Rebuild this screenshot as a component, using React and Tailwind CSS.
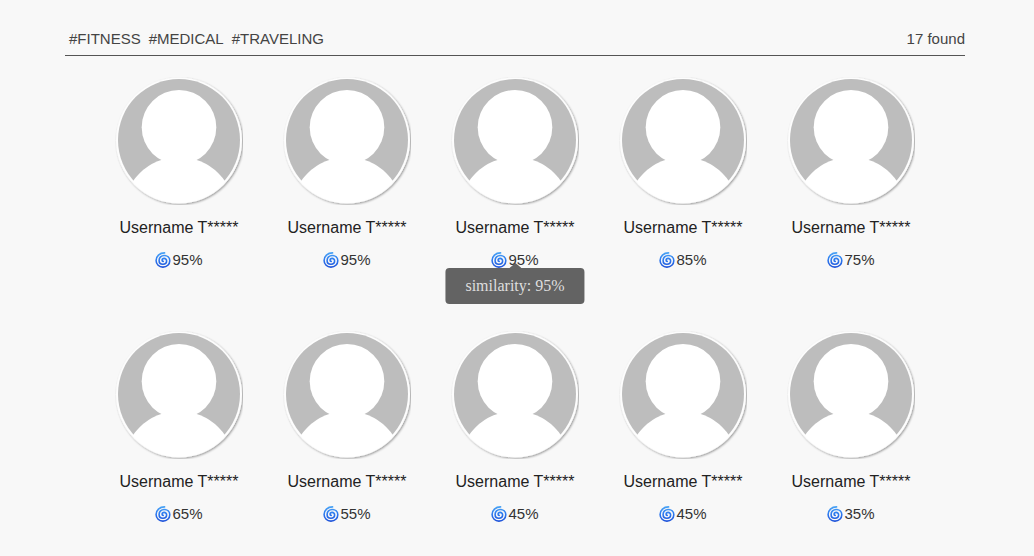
import React from 'react';

const tags = ['#FITNESS', '#MEDICAL', '#TRAVELING'];

const total = 17;

const users = [
  { id: 1, name: 'Username T*****', similarity: 95 },
  { id: 2, name: 'Username T*****', similarity: 95 },
  { id: 3, name: 'Username T*****', similarity: 95 },
  { id: 4, name: 'Username T*****', similarity: 85 },
  { id: 5, name: 'Username T*****', similarity: 75 },
  { id: 6, name: 'Username T*****', similarity: 65 },
  { id: 7, name: 'Username T*****', similarity: 55 },
  { id: 8, name: 'Username T*****', similarity: 45 },
  { id: 9, name: 'Username T*****', similarity: 45 },
  { id: 10, name: 'Username T*****', similarity: 35 },
];

const Avatar = () => (
  <svg viewBox="0 0 128 128" className="w-32 h-32" aria-hidden="true">
    <defs>
      <clipPath id="avatar-clip">
        <circle cx="64" cy="63.5" r="62" />
      </clipPath>
      <filter id="avatar-shadow" x="-10%" y="-10%" width="120%" height="120%">
        <feDropShadow dx="1" dy="1" stdDeviation="0.8" floodColor="#000" floodOpacity="0.4" />
      </filter>
    </defs>
    <circle cx="64" cy="63.5" r="63" fill="#fdfdfd" filter="url(#avatar-shadow)" />
    <circle cx="64" cy="63" r="61" fill="#bdbdbd" />
    <g clipPath="url(#avatar-clip)" fill="#fff">
      <circle cx="64" cy="50.3" r="37.3" />
      <circle cx="64" cy="136" r="56" />
    </g>
  </svg>
);

const Cyclone = () => (
  <svg viewBox="0 0 16 16" className="w-4 h-4 shrink-0" fill="none" aria-hidden="true">
    <defs>
      <linearGradient id="cyclone" gradientUnits="userSpaceOnUse" x1="8" y1="0" x2="8" y2="16">
        <stop offset="0" stopColor="#4ba6f5" />
        <stop offset="0.45" stopColor="#2f7df0" />
        <stop offset="1" stopColor="#1c4fd8" />
      </linearGradient>
    </defs>
    <path
      d="M9.6 .9C4.600 .8 1.100 4.200 1.100 8.400C1.100 12.400 4.200 15.100 7.900 15.100C11.900 15.100 14.800 12.300 14.800 8.800C14.800 5.600 12.300 3.500 9.300 3.500C6.200 3.500 4.100 5.700 4.100 8.400C4.100 10.700 5.800 12.200 7.900 12.200C10.100 12.200 11.600 10.800 11.600 9C11.600 7.400 10.500 6.400 9.200 6.400C7.900 6.400 7.100 7.300 7.100 8.300C7.100 9 7.600 9.400 8.200 9.400"
      stroke="url(#cyclone)"
      strokeWidth="1.600"
      strokeLinecap="round"
    />
  </svg>
);

const Tooltip = ({ id, children }) => (
  <span
    id={id}
    role="tooltip"
    className="absolute top-5 left-1/2 -translate-x-1/2 px-5 py-1.5 rounded bg-[#636363] text-[#dedede] text-base leading-6 whitespace-nowrap font-['Liberation_Serif',serif]"
  >
    <svg
      viewBox="0 0 12 5"
      className="absolute bottom-full left-1/2 -translate-x-1/2 w-3 h-[5px] fill-[#636363]"
      aria-hidden="true"
    >
      <path d="M0 5L6 0L12 5Z" />
    </svg>
    {children}
  </span>
);

const UserCard = ({ user, showTooltip }) => {
  const tooltipId = `similarity-${user.id}`;

  return (
    <li className="flex flex-col items-center">
      <Avatar />
      <h2 className="mt-[11px] text-base leading-6 text-[#222]">{user.name}</h2>
      <div
        className="relative mt-2 flex items-center text-[15px] leading-6 text-[#333]"
        aria-describedby={showTooltip ? tooltipId : undefined}
      >
        <Cyclone />
        <span className="pl-px">{user.similarity}%</span>
        {showTooltip && <Tooltip id={tooltipId}>similarity: {user.similarity}%</Tooltip>}
      </div>
    </li>
  );
};

const App = () => {
  const hoveredId = 3;

  return (
    <div className="min-h-screen bg-[#f8f8f8] pr-1 font-['Liberation_Sans',Arial,sans-serif]">
      <main className="w-full max-w-[900px] mx-auto">
        <header className="flex justify-between pt-[27px] pb-1 pl-1 border-b border-[#555] text-[15px] leading-6 text-[#444]">
          <ul className="flex gap-2">
            {tags.map((tag) => (
              <li key={tag}>{tag}</li>
            ))}
          </ul>
          <p>{total} found</p>
        </header>
        <ul className="grid grid-cols-5 gap-y-[59px] px-[30px] pt-[21px]">
          {users.map((user) => (
            <UserCard key={user.id} user={user} showTooltip={user.id === hoveredId} />
          ))}
        </ul>
      </main>
    </div>
  );
};

export default App;
